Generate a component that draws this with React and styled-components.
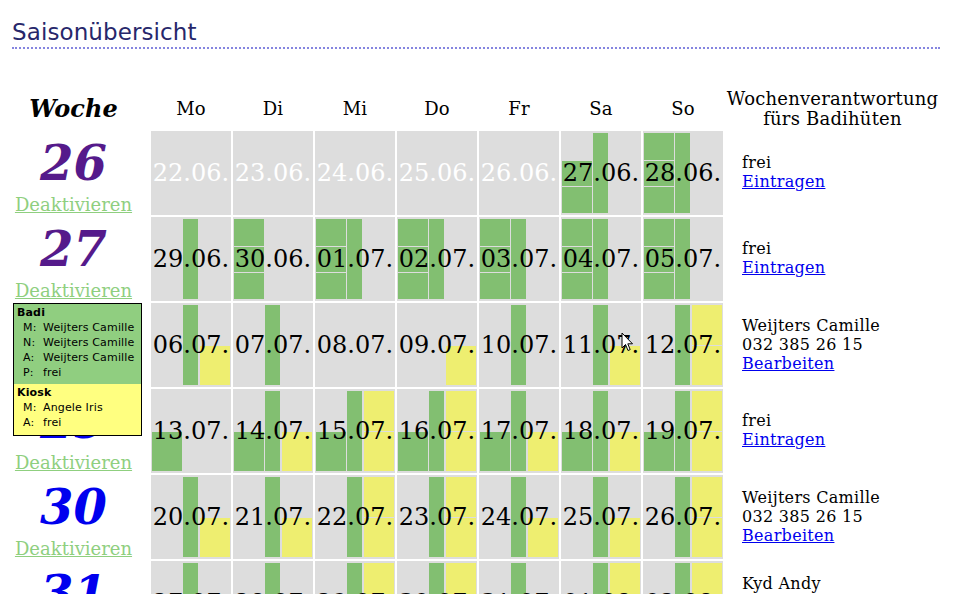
import React from "react";
import styled, { createGlobalStyle } from "styled-components";

const BADI = { M: [1, 3], N: [3, 5], A: [5, 7], h: [4, 7] };
const KIOSK = { M: [1, 4], A: [4, 7] };

// [datum, badi-slots frei, pikett frei, kiosk-slots frei, vergangen]
const weeks = [
  {
    nr: 26,
    visited: true,
    resp: null,
    days: [
      ["22.06.", "", 0, "", 1],
      ["23.06.", "", 0, "", 1],
      ["24.06.", "", 0, "", 1],
      ["25.06.", "", 0, "", 1],
      ["26.06.", "", 0, "", 1],
      ["27.06.", "NA", 1, ""],
      ["28.06.", "MNA", 1, ""]
    ]
  },
  {
    nr: 27,
    visited: true,
    resp: null,
    days: [
      ["29.06.", "", 1, ""],
      ["30.06.", "MNA", 0, ""],
      ["01.07.", "MNA", 1, ""],
      ["02.07.", "MNA", 1, ""],
      ["03.07.", "MNA", 1, ""],
      ["04.07.", "MNA", 1, ""],
      ["05.07.", "MNA", 1, ""]
    ]
  },
  {
    nr: 28,
    visited: false,
    resp: { name: "Weijters Camille", phone: "032 385 26 15" },
    days: [
      ["06.07.", "", 1, "A"],
      ["07.07.", "", 1, ""],
      ["08.07.", "", 0, ""],
      ["09.07.", "", 0, "A"],
      ["10.07.", "", 1, ""],
      ["11.07.", "", 1, "A"],
      ["12.07.", "", 1, "MA"]
    ]
  },
  {
    nr: 29,
    visited: false,
    resp: null,
    days: [
      ["13.07.", "h", 0, ""],
      ["14.07.", "h", 1, "A"],
      ["15.07.", "h", 1, "MA"],
      ["16.07.", "h", 1, "MA"],
      ["17.07.", "h", 1, "A"],
      ["18.07.", "h", 1, "A"],
      ["19.07.", "h", 1, "MA"]
    ]
  },
  {
    nr: 30,
    visited: false,
    resp: { name: "Weijters Camille", phone: "032 385 26 15" },
    days: [
      ["20.07.", "", 1, "A"],
      ["21.07.", "", 1, "A"],
      ["22.07.", "", 1, "MA"],
      ["23.07.", "", 1, "MA"],
      ["24.07.", "", 1, "A"],
      ["25.07.", "", 1, "A"],
      ["26.07.", "", 1, "MA"]
    ]
  },
  {
    nr: 31,
    visited: false,
    resp: { name: "Kyd Andy", phone: "079 412 36 58" },
    days: [
      ["27.07.", "", 1, ""],
      ["28.07.", "", 1, ""],
      ["29.07.", "", 1, "MA"],
      ["30.07.", "", 1, "MA"],
      ["31.07.", "", 1, ""],
      ["01.08.", "", 1, "MA"],
      ["02.08.", "", 1, "MA"]
    ]
  }
];

const dayNames = ["Mo", "Di", "Mi", "Do", "Fr", "Sa", "So"];

const DayCell = ({ day }) => {
  const [date, badi, pikett, kiosk, past] = day;
  return (
    <Day>
      <Bars>
        {badi.split("").map(s => (
          <Slot key={"b" + s} $col={1} $from={BADI[s][0]} $to={BADI[s][1]} $bg="#82bf71" />
        ))}
        {pikett ? <Slot $col={2} $from={1} $to={7} $bg="#82bf71" $narrow /> : null}
        {kiosk.split("").map(s => (
          <Slot key={"k" + s} $col={3} $from={KIOSK[s][0]} $to={KIOSK[s][1]} $bg="#eeee70" />
        ))}
      </Bars>
      <DateLabel $past={past}>{date}</DateLabel>
    </Day>
  );
};

const App = () => {
  return (
    <Page>
      <GlobalStyle />
      <Title>Saisonübersicht</Title>
      <Table>
        <WeekHead>Woche</WeekHead>
        {dayNames.map(d => (
          <HeadCell key={d}>{d}</HeadCell>
        ))}
        <HeadCell>
          Wochenverantwortung
          <br />
          fürs Badihüten
        </HeadCell>

        {weeks.map(w => (
          <React.Fragment key={w.nr}>
            <WeekCell>
              <WeekNr href="#" $visited={w.visited}>
                {w.nr}
              </WeekNr>
              <DeactivateLink href="#">Deaktivieren</DeactivateLink>
            </WeekCell>
            {w.days.map(d => (
              <DayCell key={d[0]} day={d} />
            ))}
            <RespCell>
              {w.resp ? (
                <>
                  <span>{w.resp.name}</span>
                  <span>{w.resp.phone}</span>
                  <Link href="#">Bearbeiten</Link>
                </>
              ) : (
                <>
                  <span>frei</span>
                  <Link href="#">Eintragen</Link>
                </>
              )}
            </RespCell>
          </React.Fragment>
        ))}
      </Table>

      <Tooltip>
        <TipSection $bg="#90ce80">
          <TipTitle>Badi</TipTitle>
          <TipRow><span>M:</span><span>Weijters Camille</span></TipRow>
          <TipRow><span>N:</span><span>Weijters Camille</span></TipRow>
          <TipRow><span>A:</span><span>Weijters Camille</span></TipRow>
          <TipRow><span>P:</span><span>frei</span></TipRow>
        </TipSection>
        <TipSection $bg="#ffff80" $last>
          <TipTitle>Kiosk</TipTitle>
          <TipRow><span>M:</span><span>Angele Iris</span></TipRow>
          <TipRow><span>A:</span><span>frei</span></TipRow>
        </TipSection>
      </Tooltip>

      <Cursor width="13" height="21" viewBox="0 0 13 21">
        <path
          d="M1 1 L1 16 L4.5 12.5 L7 18.5 L9.2 17.6 L6.8 11.8 L11.5 11.8 Z"
          fill="#fff"
          stroke="#000"
          strokeWidth="1"
          strokeLinejoin="round"
        />
      </Cursor>
    </Page>
  );
};

const GlobalStyle = createGlobalStyle`
  html, body {
    margin: 0;
    padding: 0;
    background: #ffffff;
    overflow: hidden;
  }
`;

const Page = styled.div`
  position: relative;
  padding: 19px 14px 0 10px;
  font-family: "DejaVu Serif", serif;
  color: #000;
`;

const Title = styled.h1`
  margin: 0 0 0 2px;
  width: 928px;
  padding-bottom: 2px;
  border-bottom: 2px dotted #8585e0;
  font-family: "DejaVu Sans", sans-serif;
  font-size: 23px;
  font-weight: normal;
  line-height: normal;
  letter-spacing: 0.1px;
  color: #27276b;
`;

const Table = styled.div`
  display: grid;
  grid-template-columns: 139px repeat(7, 80px) 215px;
  grid-template-rows: 44px;
  grid-auto-rows: 84px;
  gap: 2px;
  margin-top: 36px;
`;

const HeadCell = styled.div`
  display: flex;
  align-items: center;
  justify-content: center;
  padding-top: 4px;
  text-align: center;
  font-size: 18px;
  line-height: 20px;
  letter-spacing: 0.2px;
`;

const WeekHead = styled(HeadCell)`
  padding-right: 12px;
  font-size: 24px;
  font-weight: bold;
  font-style: italic;
  letter-spacing: 0;
`;

const WeekCell = styled.div`
  display: flex;
  flex-direction: column;
  align-items: center;
  justify-content: flex-start;
  padding: 4px 12px 0 0;
`;

const WeekNr = styled.a`
  font-size: 48px;
  font-weight: bold;
  font-style: italic;
  line-height: 56px;
  text-decoration: none;
  color: ${p => (p.$visited ? "#551a8b" : "#0000ee")};
`;

const DeactivateLink = styled.a`
  margin-top: 3px;
  font-size: 18px;
  line-height: 21px;
  color: #8fcf7f;
  text-decoration: underline;
`;

const Day = styled.div`
  display: grid;
  background: #dddddd;
`;

const Bars = styled.div`
  grid-area: 1 / 1;
  display: grid;
  padding: 2px 1px;
  grid-template-columns: 30px 16px 30px;
  grid-template-rows: repeat(6, 1fr);
  column-gap: 1px;
`;

const Slot = styled.div`
  grid-column: ${p => p.$col};
  grid-row: ${p => p.$from} / ${p => p.$to};
  margin-top: ${p => (p.$from > 1 ? "1px" : "0")};
  width: ${p => (p.$narrow ? "15px" : "auto")};
  background: ${p => p.$bg};
`;

const DateLabel = styled.div`
  grid-area: 1 / 1;
  place-self: center;
  font-size: 24px;
  color: ${p => (p.$past ? "#ffffff" : "#000000")};
`;

const RespCell = styled.div`
  display: flex;
  flex-direction: column;
  justify-content: center;
  align-items: flex-start;
  padding: 0 0 2px 17px;
  font-size: 16px;
  line-height: 19px;
  letter-spacing: 0.3px;
`;

const Link = styled.a`
  color: #0000ee;
  text-decoration: underline;
`;

const Tooltip = styled.div`
  position: absolute;
  left: 13px;
  top: 303px;
  width: 127px;
  border: 1px solid #000;
  font-family: "DejaVu Sans", sans-serif;
  font-size: 11px;
  line-height: 15px;
  letter-spacing: 0.15px;
  color: #000;
`;

const TipSection = styled.div`
  padding: 1px 3px ${p => (p.$last ? "5px" : "4px")};
  background: ${p => p.$bg};
`;

const TipTitle = styled.div`
  font-weight: bold;
`;

const TipRow = styled.div`
  display: grid;
  grid-template-columns: 20px 1fr;
  padding-left: 6px;
  white-space: nowrap;
`;

const Cursor = styled.svg`
  position: absolute;
  left: 621px;
  top: 332px;
`;

export default App;
